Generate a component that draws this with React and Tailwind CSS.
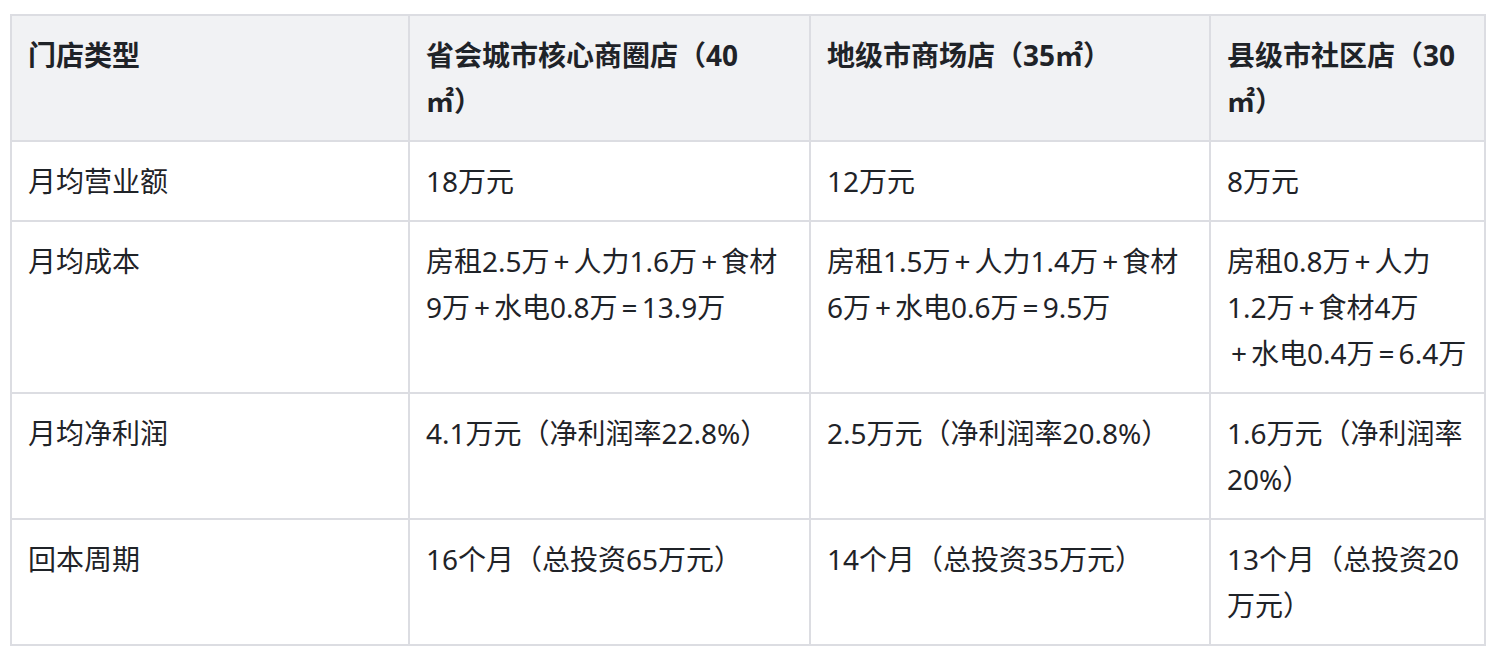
import React from "react";

// Store type comparison data
const columns = [
    "门店类型",
    <>省会城市核心商圈店（40<br />㎡）</>,
    "地级市商场店（35㎡）",
    "县级市社区店（30㎡）",
];

const rows = [
    ["月均营业额", "18万元", "12万元", "8万元"],
    [
        "月均成本",
        "房租2.5万+人力1.6万+食材9万+水电0.8万=13.9万",
        "房租1.5万+人力1.4万+食材6万+水电0.6万=9.5万",
        "房租0.8万+人力1.2万+食材4万+水电0.4万=6.4万",
    ],
    ["月均净利润", "4.1万元（净利润率22.8%）", "2.5万元（净利润率20.8%）", "1.6万元（净利润率20%）"],
    ["回本周期", "16个月（总投资65万元）", "14个月（总投资35万元）", "13个月（总投资20万元）"],
];

const widths = ["w-[398px]", "w-[401px]", "w-[400px]", "w-[275px]"];

// Give + and = a little room like the source font does
function Cell({ text }) {
    const parts = text.split(/([+=])/);
    return parts.map((p, i) =>
        p === "+" || p === "=" ? (
            <span key={i} className="px-[4px]">{p}</span>
        ) : (
            <span key={i}>{p}</span>
        )
    );
}

function App() {
    return (
        <div className="min-h-screen bg-white pt-[14px] px-[10px] text-[#1f2328] [font-family:'Noto_Sans','Noto_Sans_CJK_SC',sans-serif]">
            <table className="w-[1474px] table-fixed border-collapse text-[28px] leading-[46px]">
                <colgroup>
                    {widths.map((w, i) => (
                        <col key={i} className={w} />
                    ))}
                </colgroup>
                <thead>
                    <tr className="bg-[#f1f2f4]">
                        {columns.map((c, i) => (
                            <th key={i} className="border-2 border-[#dcdde2] px-[16px] py-[16px] text-left align-top font-bold">
                                {c}
                            </th>
                        ))}
                    </tr>
                </thead>
                <tbody>
                    {rows.map((row, r) => (
                        <tr key={r}>
                            {row.map((cell, i) => (
                                <td key={i} className="border-2 border-[#dcdde2] px-[16px] py-[16px] align-top">
                                    <Cell text={cell} />
                                </td>
                            ))}
                        </tr>
                    ))}
                </tbody>
            </table>
        </div>
    );
}

export default App;
